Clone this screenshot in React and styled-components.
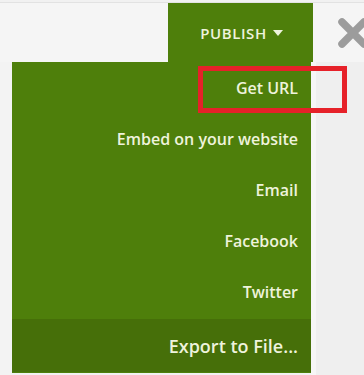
import React from 'react';
import styled, { createGlobalStyle } from 'styled-components';

const GlobalStyle = createGlobalStyle`
  html, body {
    margin: 0;
    padding: 0;
    background: #f1f1f1;
  }
  body {
    font-family: 'Open Sans', 'Liberation Sans', sans-serif;
  }
`;

const Page = styled.div`
  width: 364px;
  height: 375px;
  overflow: hidden;
  background: #f1f1f1;
  padding-top: 2px;
  box-sizing: border-box;
`;

const TopBar = styled.div`
  display: flex;
  height: 61px;
  background: #f5f5f5;
  border-top: 1px solid #e2e2e2;
  border-bottom: 1px solid #e4e4e4;
  box-sizing: border-box;
  margin-bottom: -1px;
`;

const Spacer = styled.div`
  flex: 0 0 168px;
`;

const PublishTab = styled.div`
  flex: 0 0 143px;
  margin-bottom: -1px;
  background: #4e7f0b;
  color: #eef3dc;
  display: flex;
  align-items: center;
  justify-content: center;
  gap: 6px;
  font-weight: 600;
  font-size: 15px;
  letter-spacing: 0.6px;
  padding-left: 2px;
`;

const Caret = styled.span`
  width: 0;
  height: 0;
  border-left: 5px solid transparent;
  border-right: 5px solid transparent;
  border-top: 6px solid #eef3dc;
`;

const CloseBox = styled.div`
  flex: 1;
  display: flex;
  align-items: center;
  justify-content: flex-end;
  margin-right: -5px;
`;

const Body = styled.div`
  display: flex;
  height: 313px;
`;

const Gutter = styled.div`
  flex: 0 0 12px;
  background: #f3f3f3;
`;

const Menu = styled.div`
  position: relative;
  flex: 0 0 299px;
  display: flex;
  flex-direction: column;
  background: #4e7f0b;
  height: 311px;
`;

const Item = styled.div`
  height: ${p => (p.$export ? 53 : 51)}px;
  display: flex;
  align-items: center;
  justify-content: flex-end;
  padding-right: 13px;
  color: #eef3dc;
  font-weight: 600;
  font-size: ${p => (p.$export ? 18 : 16)}px;
  background: ${p => (p.$export ? '#466f09' : 'transparent')};
  margin-top: ${p => (p.$export ? 2 : 0)}px;
`;

const Highlight = styled.div`
  position: absolute;
  left: 186px;
  top: 4px;
  width: 149px;
  height: 47px;
  box-sizing: border-box;
  border: 5px solid #e62129;
`;

const RightPane = styled.div`
  flex: 1;
  background: #efefef;
  border-left: 5px solid #f6f6f6;
`;

const items = ['Get URL', 'Embed on your website', 'Email', 'Facebook', 'Twitter'];

const App = () => (
  <>
    <GlobalStyle />
    <Page>
      <TopBar>
        <Spacer />
        <PublishTab>
          PUBLISH <Caret />
        </PublishTab>
        <CloseBox>
          <svg width="32" height="30" viewBox="0 0 32 30">
            <path d="M5 4 L27 26 M27 4 L5 26" stroke="#9c9c9c" strokeWidth="7.5" strokeLinecap="round" />
          </svg>
        </CloseBox>
      </TopBar>
      <Body>
        <Gutter />
        <Menu>
          {items.map(t => (
            <Item key={t}>{t}</Item>
          ))}
          <Item $export>Export to File...</Item>
          <Highlight />
        </Menu>
        <RightPane />
      </Body>
    </Page>
  </>
);

export default App;
